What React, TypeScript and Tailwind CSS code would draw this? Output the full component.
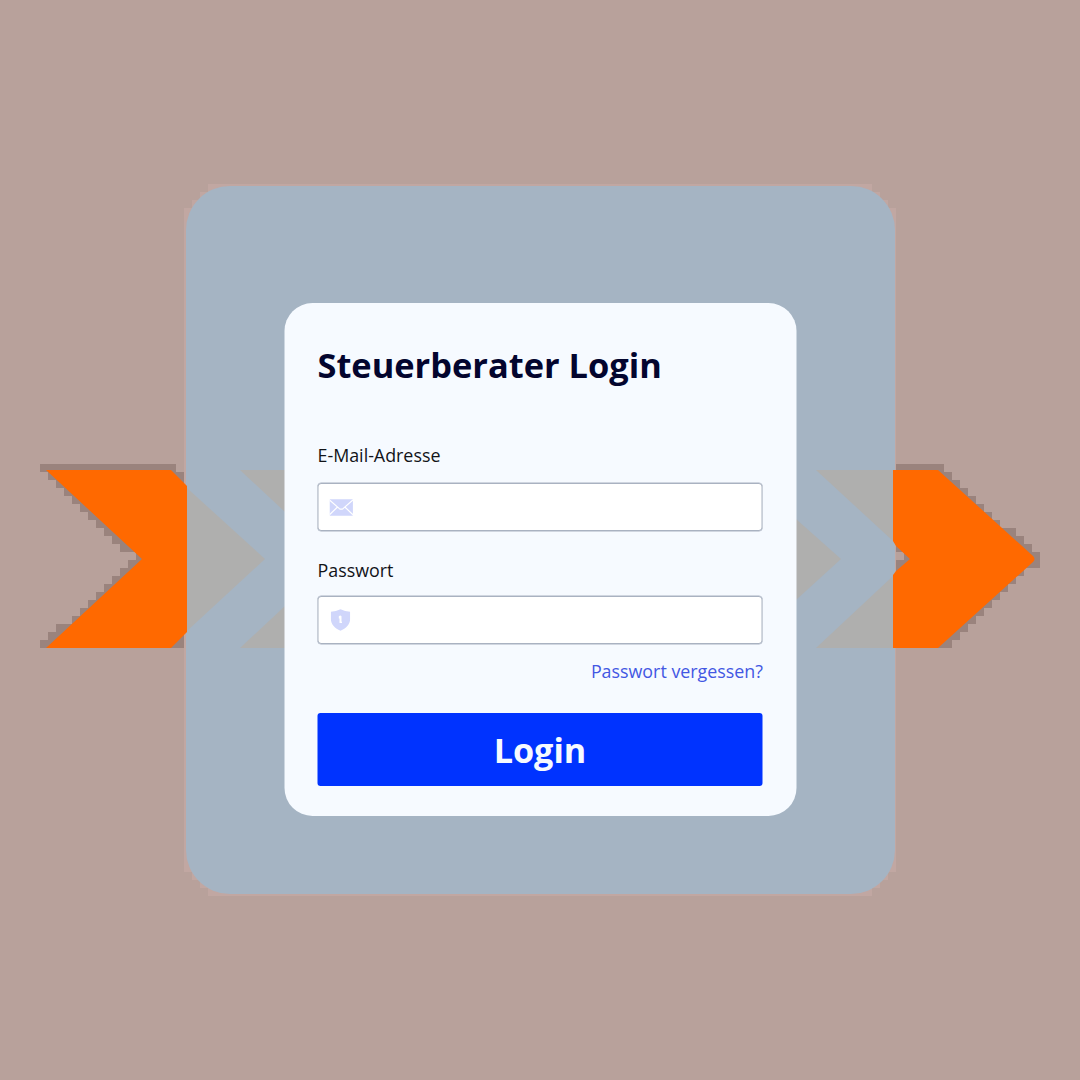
import React from "react";

// Left edge of each 8px step in the left arrow's shadow, from y = 464 down.
const leftSteps = [40, 48, 56, 64, 72, 80, 88, 96, 104, 112, 120, 136, 128, 120, 112, 104, 96, 88, 80, 72, 56, 48, 40];
// Right edge of each 8px step in the right arrow's shadow.
const rightSteps = [944, 952, 960, 968, 976, 984, 992, 1000, 1016, 1024, 1032, 1040, 1040, 1024, 1016, 1008, 1000, 992, 984, 976, 968, 960, 952];

function Arrows() {
  return (
    <svg className="absolute inset-0" width="1080" height="1080" viewBox="0 0 1080 1080" aria-hidden="true">
      <g fill="#9a837d" shapeRendering="crispEdges">
        {leftSteps.map((x, i) => (
          <rect key={i} x={x} y={464 + i * 8} width={(i === 0 ? 176 : 184) - x} height="8" />
        ))}
        {rightSteps.map((x, i) => (
          <rect key={i} x="896" y={464 + i * 8} width={x - 896} height="8" />
        ))}
      </g>
      <rect x="896" y="552" width="8" height="8" fill="#b8a19b" />
      <path
        d="M208 184H872V192H880V200H888V208H896V872H888V880H880V888H872V896H208V888H200V880H192V872H184V208H192V200H200V192H208Z"
        fill="#c1a7a2"
      />
    </svg>
  );
}

function ArrowFills() {
  return (
    <svg className="absolute inset-0" width="1080" height="1080" viewBox="0 0 1080 1080" aria-hidden="true">
      <g fill="#afafae">
        <path d="M187 488L265 559L187 631Z" />
        <path d="M240 470H285V512Z" />
        <path d="M285 606V648H240Z" />
        <path d="M796 519L841 559L796 600Z" />
        <path d="M816 470H893V541Z" />
        <path d="M893 576V648H816Z" />
      </g>
      <g fill="#ff6900">
        <path d="M46 470H171L187 486V632L171 648H46L142 559Z" />
        <path d="M893 470H938L1033 556Q1036 559 1033 562L938 648H893V575L896 571L910 559L896 546L893 541Z" />
      </g>
    </svg>
  );
}

function MailIcon() {
  return (
    <svg className="ml-[12px] h-[17px] w-[24px]" viewBox="0 0 24 17" aria-hidden="true">
      <rect x="0" y="0.3" width="23.4" height="16.4" rx="0.8" fill="#d0d6fb" />
      <path d="M0 1L9.6 9.4Q11.7 11 13.8 9.4L23.4 1M0 15.8L7.8 8.2M23.4 15.8L15.6 8.2" fill="none" stroke="#fff" strokeWidth="1.2" />
    </svg>
  );
}

function ShieldIcon() {
  return (
    <svg className="ml-[13px] h-[22px] w-[20px]" viewBox="0 0 20 22" aria-hidden="true">
      <path d="M10 0.3Q14.5 2.4 19.6 2.8V10C19.6 15.5 15.5 19.3 10 21.7C4.5 19.3 0.4 15.5 0.4 10V2.8Q5.5 2.4 10 0.3Z" fill="#d0d6fb" />
      <path d="M8.3 7.2Q10 5.8 11 7.3V12.7H11.5V14H9V9.6H8.3Z" fill="#fff" />
    </svg>
  );
}

function Field({ children }: { children: React.ReactNode }) {
  return (
    <div className="flex h-[48px] w-[445px] items-center rounded-[4px] bg-white shadow-[inset_0_0_0_1px_#a9b2c1,0_0_0_0.5px_#a9b2c1]">
      {children}
    </div>
  );
}

export default function App() {
  return (
    <main className="relative h-[1080px] w-[1080px] overflow-hidden bg-[#b8a19b] pt-[186px] pl-[186px] font-['Open_Sans',sans-serif]">
      <Arrows />
      <section className="relative h-[708px] w-[709px] rounded-[44px] bg-[#a5b4c3] pt-[117px] pl-[98px]">
        <form className="relative z-10 flex h-[512.5px] w-[512px] translate-x-[0.5px] flex-col rounded-[28px] bg-[#f6faff] pl-[33px]">
          <h1 className="mt-[38px] h-[48px] text-[34.4px] leading-[48px] font-bold whitespace-nowrap text-[#03052e]">Steuerberater Login</h1>
          <label className="mt-[54px] h-[24px] text-[17.85px] leading-[24px] text-[#111318]">E-Mail-Adresse</label>
          <div className="mt-[16px]"><Field><MailIcon /></Field></div>
          <label className="mt-[27px] h-[24px] text-[17.85px] leading-[24px] text-[#111318]">Passwort</label>
          <div className="mt-[14px]"><Field><ShieldIcon /></Field></div>
          <a className="mt-[15px] mr-[33.5px] h-[24px] self-end text-[17.85px] leading-[24px] text-[#4257e3]">Passwort vergessen?</a>
          <button type="button" className="mt-[30px] h-[73px] w-[445px] rounded-[3px] bg-[#0033ff] text-[34.2px] leading-[74px] font-bold text-[#f6faff]">
            Login
          </button>
        </form>
      </section>
      <ArrowFills />
    </main>
  );
}
